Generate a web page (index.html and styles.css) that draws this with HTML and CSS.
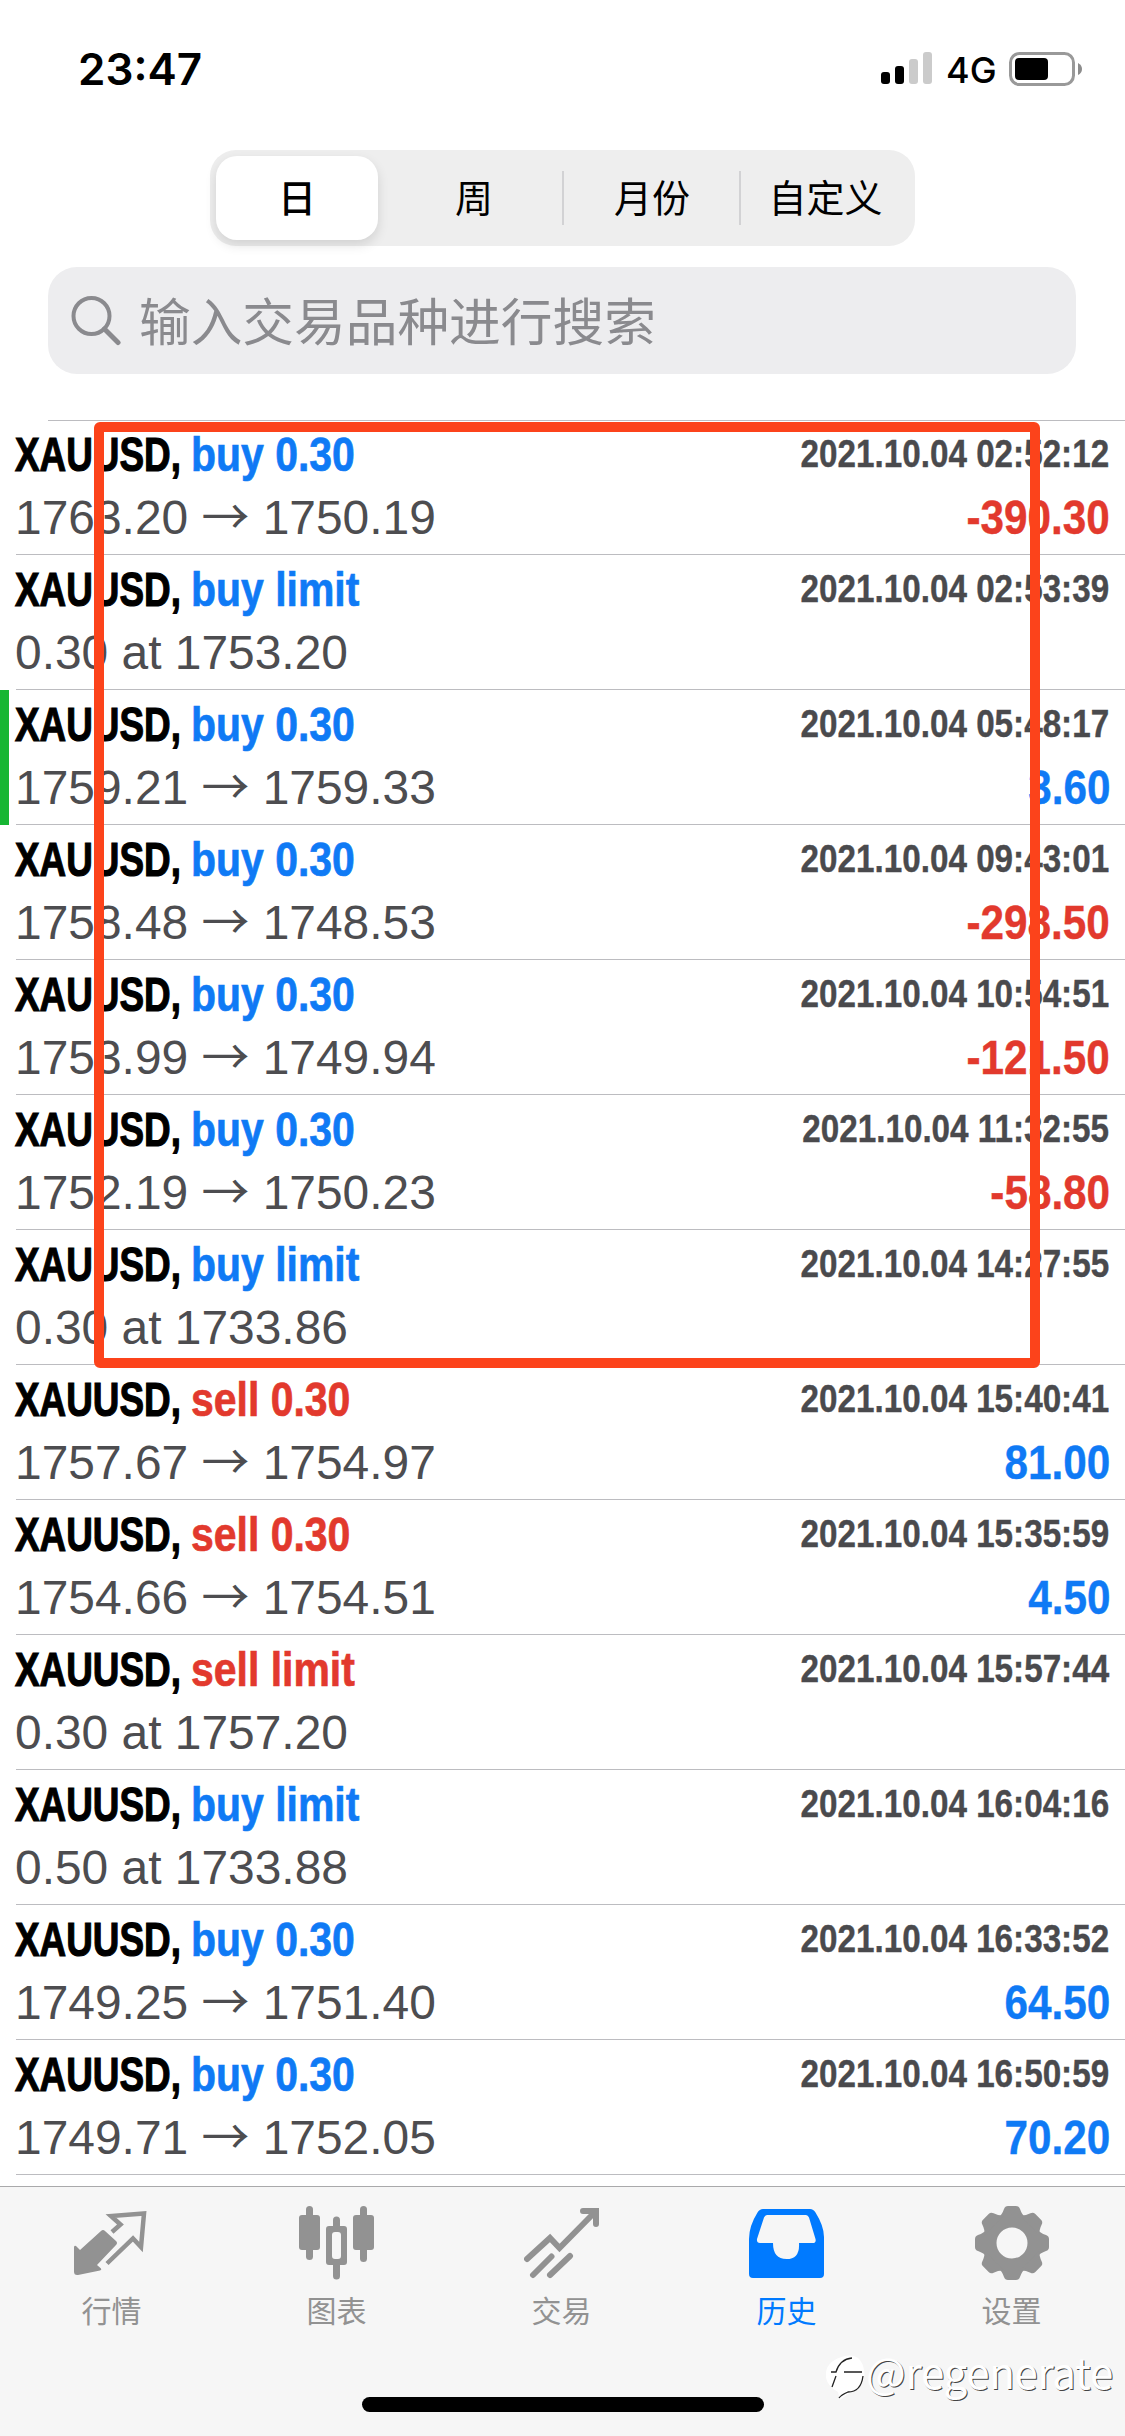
FILE: index.html
```
<!DOCTYPE html>
<html lang="zh-CN">
<head>
<meta charset="utf-8">
<title>历史</title>
<link rel="stylesheet" href="styles.css">
</head>
<body>
<div class="screen">
  <header class="status">
    <div class="clock">23:47</div>
    <div class="status-right">
      <svg class="signal" width="52" height="34" viewBox="0 0 52 34"><g fill="#000"><rect x="0" y="20" width="9" height="12" rx="3"/><rect x="14" y="14" width="9" height="18" rx="3"/></g><g fill="#cbcbcb"><rect x="28" y="7" width="9" height="25" rx="3"/><rect x="42" y="0" width="9" height="32" rx="3"/></g></svg>
      <span class="network">4G</span>
      <svg class="battery" width="74" height="34" viewBox="0 0 74 34"><rect x="1.5" y="1.5" width="63" height="31" rx="9" fill="none" stroke="#999" stroke-width="3"/><rect x="6" y="6" width="33" height="22" rx="4"/><path d="M69 11q4 2 4 6t-4 6z" fill="#8c8c8c"/></svg>
    </div>
  </header>
  <nav class="segments">
    <button class="segment segment-active">日</button>
    <button class="segment segment-week">周</button>
    <button class="segment segment-line">月份</button>
    <button class="segment segment-line">自定义</button>
  </nav>
  <div class="search">
    <svg width="50" height="50" viewBox="0 0 50 50" fill="none" stroke="#8a8a8e" stroke-width="4"><circle cx="20.500" cy="20" r="18"/><path d="M33.500 33 47 46.500" stroke-width="5" stroke-linecap="round"/></svg>
    <span class="placeholder">输入交易品种进行搜索</span>
  </div>
  <main class="history" id="history"></main>
  <nav class="tabs">
    <a class="tab"><svg width="76" height="76" viewBox="0 0 76 76"><path d="M27 26q2-2 4 0L42 36q2 2 0 4L23 60l4 3.500q1 1.500-1 2L4 70q-4 .5-4-3.500V42q.5-2 2-1l4 4z" fill="currentColor"/><path d="M38 27l8.500-7.500L37 11 70 8.500 67 42l-8-8.500L33 58.500" fill="none" stroke="currentColor" stroke-width="4.500"/></svg><span>行情</span></a>
    <a class="tab"><svg width="76" height="76" viewBox="0 0 76 76" fill="currentColor"><rect x="0" y="10" width="21" height="35" rx="3"/><rect x="7" y="1" width="7" height="54" rx="3.500"/><path fill-rule="evenodd" d="M30 21h15q3 0 3 3v33q0 3-3 3H30q-3 0-3-3V24q0-3 3-3zm6 6q-3 0-3 3v21q0 3 3 3h3q3 0 3-3V30q0-3-3-3z"/><path d="M34 22v-7a3.500 3.500 0 0 1 7 0v7zM34 59v12a3.500 3.500 0 0 0 7 0V59z"/><rect x="54" y="10" width="21" height="35" rx="3"/><rect x="61" y="1" width="7" height="56" rx="3.500"/></svg><span>图表</span></a>
    <a class="tab"><svg width="76" height="76" viewBox="0 0 76 76" fill="none" stroke="currentColor" stroke-width="6" stroke-linecap="round"><path d="M3 54 26 33l9.500 10L70 8M59 6h13v13M9 70l18.500-18.500M26 70l20-19"/></svg><span>交易</span></a>
    <a class="tab tab-active"><svg width="76" height="76" viewBox="0 0 76 76"><path fill="currentColor" fill-rule="evenodd" d="M14 4h47q3.500 0 5.500 3.500Q75 21 75 32v37q0 4-4 4H4q-4 0-4-4V34Q0 21 8.500 7.500 10.500 4 14 4zm4 6q-2 0-3 2.500L8 34q-.5 4 3 4h13q0 16 13.500 16T50 38h13.500q4 0 3-4L60 12.500Q59 10 57 10z"/></svg><span>历史</span></a>
    <a class="tab"><svg width="76" height="76" viewBox="-38 -38 76 76"><g fill="currentColor"><circle r="22" fill="none" stroke="currentColor" stroke-width="13"/><path id="tooth" d="M-14-25Q-10-28-8-34-7-37-4-37H4Q7-37 8-34 10-28 14-25z"/><use href="#tooth" transform="rotate(45)"/><use href="#tooth" transform="rotate(90)"/><use href="#tooth" transform="rotate(135)"/><use href="#tooth" transform="rotate(180)"/><use href="#tooth" transform="rotate(225)"/><use href="#tooth" transform="rotate(270)"/><use href="#tooth" transform="rotate(315)"/></g></svg><span>设置</span></a>
  </nav>
  <div class="home-bar"></div>
  <div class="marker"></div>
  <div class="watermark"><svg width="40" height="48" viewBox="0 0 40 48"><path d="M19 2Q35-1 38 16T22 40L14 46 12 38Q-2 30 0 18T19 2z" fill="#fff"/><path d="M5 18H10Q14 5 26 4M18 18H36M37 22Q35 38 22 38 15 41 13 44M10 22 6 33" fill="none" stroke="#222" stroke-width="1.300"/></svg><span class="watermark-name">@regenerate</span></div>
</div>
<script src="app.js"></script>
</body>
</html>
```
FILE: styles.css
```
* { box-sizing: border-box; }
body { margin: 0; background: #fff; font-family: "Liberation Sans", "Noto Sans CJK SC", sans-serif; }
.screen { position: relative; width: 1125px; height: 2436px; overflow: hidden; display: flex; flex-direction: column; }
.status { height: 150px; display: flex; justify-content: space-between; padding: 44px 42px 0 78px; }
.clock { font: 600 44px/50px Inter, sans-serif; }
.status-right { display: flex; align-items: flex-start; padding-top: 8px; }
.network { font: 500 36px/36px Inter, sans-serif; width: 48px; margin: 0 15px 0 13px; }
.segments { width: 705px; height: 96px; margin-left: 210px; padding: 6px; display: grid; grid-template-columns: 162px 184px 177px 170px; background: #eee; border-radius: 26px; }
.segment { border: 0; padding: 0; background: none; font: 400 38px/80px "Noto Sans CJK SC", sans-serif; color: #000; position: relative; padding-bottom: 4px; }
.segment-active { background: #fff; border-radius: 21px; font-weight: 500; box-shadow: 0 5px 12px rgba(0,0,0,.12); }
.segment-week { padding-left: 8px; }
.segment-line { padding-left: 3px; }
.segment-line::before { content: ""; position: absolute; left: 0; top: 15px; width: 2px; height: 54px; background: #d2d2d4; }
.search { width: 1028px; height: 107px; margin: 21px 0 46px 48px; display: flex; align-items: center; padding-left: 23px; gap: 18px; background: #ededef; border-radius: 29px; }
.placeholder { font: 400 51.700px/60px "Noto Sans CJK SC", sans-serif; color: #8a8a8e; padding-bottom: 3px; }
.history { height: 1766px; }
.history::before { content: ""; display: block; height: 1px; margin-left: 48px; background: #bcbcc0; }
.deal { height: 135px; padding: 0 16px; display: grid; grid-template-rows: 62px 72px; background: linear-gradient(#bcbcc0, #bcbcc0) 16px 100% / 100% 1px no-repeat; }
.deal:first-of-type { height: 134px; grid-template-rows: 61px 72px; }
.deal:first-of-type .deal-line:first-child { margin-top: -1px; }
.deal-marked { border-left: 9px solid #17b633; padding-left: 7px; background-position: 7px 100%; }
.deal-line { display: flex; white-space: pre; font-kerning: none; }
.symbol { width: 175px; font: 700 48px/70px "Liberation Sans", sans-serif; transform: translateX(-1px) scaleX(.768); transform-origin: left; -webkit-text-stroke: 1.2px; }
.order { font: 700 48px/70px "Liberation Sans", sans-serif; transform: scaleX(.853); transform-origin: left; -webkit-text-stroke: .7px; }
.time, .profit { margin-left: auto; transform-origin: right; -webkit-text-stroke: .4px; }
.buy { color: #0f7af5; }
.sell { color: #e2392d; }
.time { font: 700 39px/68px "Liberation Sans", sans-serif; color: #4a4a4d; transform: scaleX(.852); }
.price { font-size: 48px; line-height: 71px; color: #4d4d50; transform: translateX(-1px) scaleX(.998); transform-origin: left; }
.arrow { font-family: "Noto Sans CJK SC"; line-height: 0; }
.profit { font: 700 48px/71px "Liberation Sans", sans-serif; transform: translateX(1px) scaleX(.88); }
.tabs { height: 250px; border-top: 1px solid #a9a9ab; background: #f6f6f6; display: grid; grid-template-columns: repeat(5, 1fr); }
.tab { display: flex; flex-direction: column; align-items: center; padding: 18px 2px 0 0; color: #929292; font: 400 30px/40px "Noto Sans CJK SC", sans-serif; }
.tab span { margin-top: 8px; }
.tab-active { color: #007aff; }
.home-bar { position: absolute; left: 362px; top: 2397px; width: 402px; height: 15px; border-radius: 8px; background: #000; }
.marker { position: absolute; left: 94px; top: 422px; width: 946px; height: 946px; border: 10px solid #fc431b; border-radius: 6px; }
.watermark { position: absolute; left: 826px; top: 2354px; display: flex; }
.watermark-name { font: 400 42px/44px "Noto Sans CJK SC", sans-serif; letter-spacing: -.3px; margin-top: -5px; color: #fff; text-shadow: 1px 1px 0 #444; }
```
FILE: app.js
```
const deals = [
  ["buy", "0.30", "02:52:12", "1763.20", "1750.19", "-390.30"],
  ["buy", "limit", "02:53:39", "0.30", "1753.20"],
  ["buy", "0.30", "05:48:17", "1759.21", "1759.33", "3.60", "deal-marked"],
  ["buy", "0.30", "09:43:01", "1758.48", "1748.53", "-298.50"],
  ["buy", "0.30", "10:54:51", "1753.99", "1749.94", "-121.50"],
  ["buy", "0.30", "11:32:55", "1752.19", "1750.23", "-58.80"],
  ["buy", "limit", "14:27:55", "0.30", "1733.86"],
  ["sell", "0.30", "15:40:41", "1757.67", "1754.97", "81.00"],
  ["sell", "0.30", "15:35:59", "1754.66", "1754.51", "4.50"],
  ["sell", "limit", "15:57:44", "0.30", "1757.20"],
  ["buy", "limit", "16:04:16", "0.50", "1733.88"],
  ["buy", "0.30", "16:33:52", "1749.25", "1751.40", "64.50"],
  ["buy", "0.30", "16:50:59", "1749.71", "1752.05", "70.20"]
];

document.getElementById("history").innerHTML = deals.map(([side, size, time, from, to, profit, mark = ""]) => `
  <article class="deal ${mark}">
    <div class="deal-line"><span class="symbol">XAUUSD,</span><span class="order ${side}">${side} ${size}</span><span class="time">2021.10.04 ${time}</span></div>
    <div class="deal-line"><span class="price">${profit ? `${from} <span class="arrow">→</span> ${to}` : `${from} at ${to}`}</span>${profit ? `<span class="profit ${profit[0] === "-" ? "sell" : "buy"}">${profit}</span>` : ""}</div>
  </article>`).join("");
```
